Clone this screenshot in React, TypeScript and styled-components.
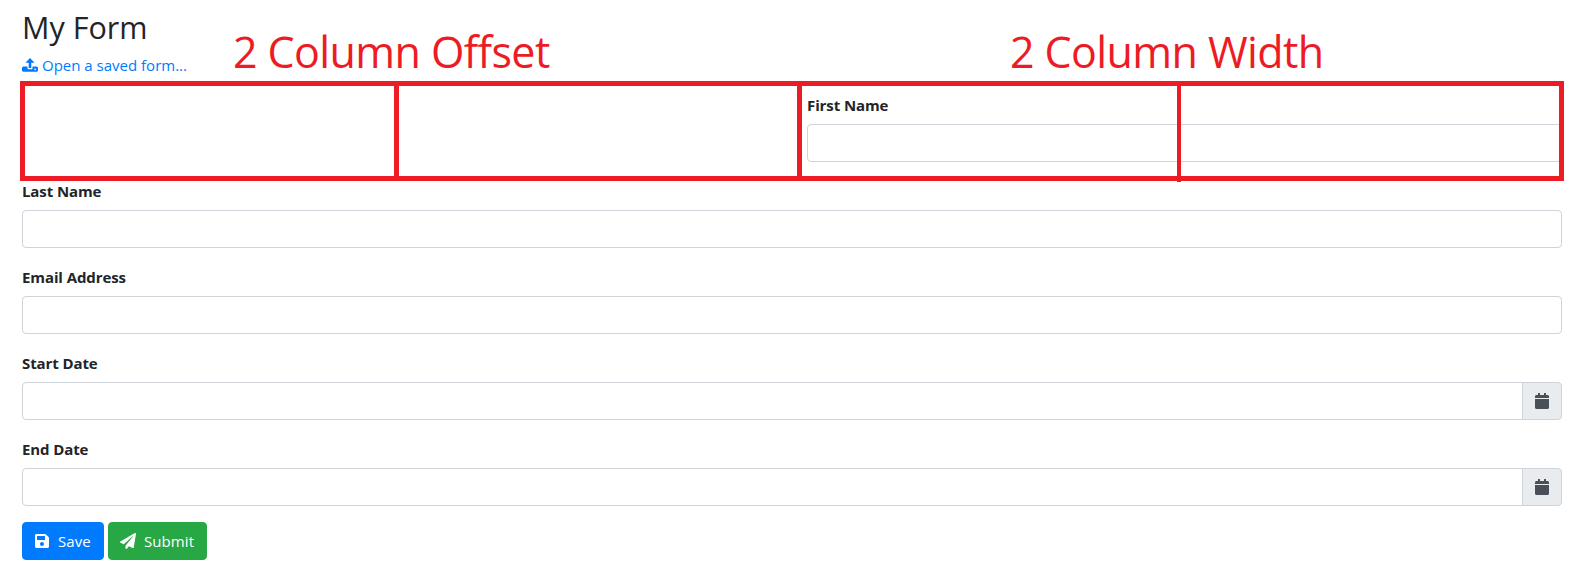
import React from "react";
import styled, { createGlobalStyle } from "styled-components";
import { FaCalendar, FaPaperPlane, FaSave } from "react-icons/fa";

const GlobalStyle = createGlobalStyle`
  html, body {
    margin: 0;
    padding: 0;
    background: #fff;
    overflow: hidden;
  }
  body {
    font-family: "Open Sans", "Noto Sans", sans-serif;
    font-size: 15px;
    color: #212529;
  }
  * {
    box-sizing: border-box;
  }
`;

const Page = styled.div`
  position: relative;
  height: 588px;
  padding: 10px 24px 0 22px;
`;

const Title = styled.h3`
  margin: 0 0 10px;
  font-size: 30.5px;
  font-weight: 400;
  line-height: 34px;
`;

const OpenLink = styled.a`
  display: flex;
  align-items: center;
  gap: 4px;
  height: 21px;
  margin-bottom: 18px;
  color: #007bff;
  font-size: 15px;
  text-decoration: none;
`;

const UploadIcon = () => (
  <svg width="16" height="16" viewBox="0 0 16 16" fill="currentColor">
    <path d="M8 1 12.6 5.8H9.3V11H6.7V5.8H3.4Z" />
    <path
      fillRule="evenodd"
      d="M1.5 9.5H5.5V11.4Q5.5 12.2 6.3 12.2H9.7Q10.5 12.2 10.5 11.4V9.5H14.5Q16 9.5 16 11V13.2Q16 14.8 14.5 14.8H1.5Q0 14.8 0 13.2V11Q0 9.5 1.5 9.5ZM13.2 11.4A.9.9 0 1 0 13.2 13.2.9.9 0 1 0 13.2 11.4Z"
    />
  </svg>
);

const Field = styled.div<{ $offset?: boolean }>`
  margin-bottom: 17px;
  padding-left: ${(p) => (p.$offset ? "785px" : "0")};
`;

const Label = styled.label`
  display: block;
  height: 24px;
  margin-bottom: 7px;
  font-size: 15px;
  font-weight: 700;
  line-height: 24px;
  letter-spacing: -0.1px;
`;

const InputGroup = styled.div`
  display: flex;
`;

const Input = styled.input<{ $attached?: boolean }>`
  flex: 1;
  min-width: 0;
  height: 38px;
  padding: 6px 12px;
  background: #fff;
  border: 1px solid #ced4da;
  border-radius: ${(p) => (p.$attached ? "4px 0 0 4px" : "4px")};
  outline: none;
`;

const Addon = styled.span`
  display: flex;
  align-items: center;
  justify-content: center;
  width: 40px;
  height: 38px;
  margin-left: -1px;
  background: #e9ecef;
  border: 1px solid #ced4da;
  border-radius: 0 4px 4px 0;
  color: #495057;
  font-size: 16px;
`;

const Actions = styled.div`
  display: flex;
  gap: 4px;
  margin-top: -1px;
`;

const Button = styled.button<{ $color: string }>`
  display: flex;
  align-items: center;
  gap: 8px;
  height: 38px;
  padding: 0 12px 0 11px;
  background: ${(p) => p.$color};
  border: 1px solid ${(p) => p.$color};
  border-radius: 4px;
  color: #fff;
  font-family: inherit;
  font-size: 15px;
  letter-spacing: 0.1px;

  svg {
    font-size: 16px;
  }
`;

const Frame = styled.div`
  position: absolute;
  top: 81px;
  left: 20px;
  width: 1544px;
  height: 100px;
  display: grid;
  grid-template-columns: 374px 403px 379px 1fr;
  border: 5px solid #ed1c24;
  pointer-events: none;
`;

const FrameCell = styled.div<{ $divider?: number; $tick?: boolean }>`
  position: relative;
  border-right: ${(p) => p.$divider ?? 0}px solid #ed1c24;

  ${(p) =>
    p.$tick &&
    `&::after {
      content: "";
      position: absolute;
      right: -4px;
      bottom: -6px;
      width: 4px;
      height: 1px;
      background: #ed1c24;
    }`}
`;

const Note = styled.div<{ $left: number }>`
  position: absolute;
  top: 22px;
  left: ${(p) => p.$left}px;
  color: #ed1c24;
  font-size: 43px;
  line-height: 60px;
  letter-spacing: -0.6px;
  white-space: nowrap;
`;

export default function App() {
  return (
    <>
      <GlobalStyle />
      <Page>
        <Title>My Form</Title>
        <OpenLink href="#">
          <UploadIcon />
          Open a saved form...
        </OpenLink>

        <Field $offset>
          <Label>First Name</Label>
          <InputGroup>
            <Input />
          </InputGroup>
        </Field>
        <Field>
          <Label>Last Name</Label>
          <InputGroup>
            <Input />
          </InputGroup>
        </Field>
        <Field>
          <Label>Email Address</Label>
          <InputGroup>
            <Input />
          </InputGroup>
        </Field>
        <Field>
          <Label>Start Date</Label>
          <InputGroup>
            <Input $attached />
            <Addon>
              <FaCalendar />
            </Addon>
          </InputGroup>
        </Field>
        <Field>
          <Label>End Date</Label>
          <InputGroup>
            <Input $attached />
            <Addon>
              <FaCalendar />
            </Addon>
          </InputGroup>
        </Field>

        <Actions>
          <Button $color="#007bff">
            <FaSave />
            Save
          </Button>
          <Button $color="#28a745">
            <FaPaperPlane />
            Submit
          </Button>
        </Actions>

        <Note $left={233}>2 Column Offset</Note>
        <Note $left={1010}>2 Column Width</Note>
        <Frame>
          <FrameCell $divider={5} />
          <FrameCell $divider={5} />
          <FrameCell $divider={4} $tick />
          <FrameCell />
        </Frame>
      </Page>
    </>
  );
}
